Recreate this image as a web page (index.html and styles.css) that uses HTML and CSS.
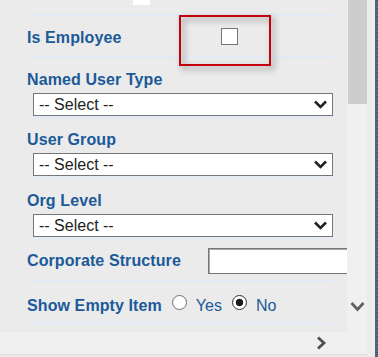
FILE: index.html
```html
<!DOCTYPE html>
<html>
<head>
<meta charset="utf-8">
<link rel="stylesheet" href="styles.css">
</head>
<body>
<div class="window">
  <div class="client">
    <div class="panes">
      <div class="viewport">
        <div class="form">
          <div class="row row--top"><span class="stub"></span></div>
          <div class="row row--check">
            <label class="lbl">Is Employee</label>
            <input type="checkbox" class="chk">
          </div>
          <div class="row row--stack">
            <label class="lbl">Named User Type</label>
            <div class="sel"><span>-- Select --</span><svg width="13" height="9" viewBox="0 0 13 9"><polyline points="1,1.5 6.5,7 12,1.5" fill="none" stroke="#222" stroke-width="2.5"/></svg></div>
          </div>
          <div class="row row--stack row--tall">
            <label class="lbl">User Group</label>
            <div class="sel"><span>-- Select --</span><svg width="13" height="9" viewBox="0 0 13 9"><polyline points="1,1.5 6.5,7 12,1.5" fill="none" stroke="#222" stroke-width="2.5"/></svg></div>
          </div>
          <div class="row row--stack">
            <label class="lbl">Org Level</label>
            <div class="sel"><span>-- Select --</span><svg width="13" height="9" viewBox="0 0 13 9"><polyline points="1,1.5 6.5,7 12,1.5" fill="none" stroke="#222" stroke-width="2.5"/></svg></div>
          </div>
          <div class="row row--field">
            <label class="lbl">Corporate Structure</label>
            <input type="text" class="txt">
          </div>
          <div class="row row--radio">
            <label class="lbl">Show Empty Item</label>
            <input type="radio" name="empty" class="rad">
            <span class="opt">Yes</span>
            <input type="radio" name="empty" class="rad" checked>
            <span class="opt">No</span>
          </div>
        </div>
        <div class="callout"></div>
      </div>
      <div class="vscroll">
        <div class="thumb"></div>
        <div class="spacer"></div>
        <svg class="down" width="15" height="11" viewBox="0 0 15 11"><polyline points="1.5,2 7.5,8.5 13.5,2" fill="none" stroke="#606060" stroke-width="2.8"/></svg>
      </div>
    </div>
    <div class="hscroll">
      <svg class="right" width="11" height="14" viewBox="0 0 11 14"><polyline points="2,1.5 8,7 2,12.5" fill="none" stroke="#505050" stroke-width="2.8"/></svg>
    </div>
    <div class="bottom-edge"></div>
  </div>
  <div class="gutter"></div>
  <div class="edge"></div>
</div>
</body>
</html>
```

FILE: styles.css
```css
html, body {
  margin: 0;
  padding: 0;
}
body {
  width: 378px;
  height: 357px;
  overflow: hidden;
  background: #ebebeb;
  font-family: "Liberation Sans", Arial, sans-serif;
}
.window {
  display: flex;
  height: 357px;
}
.client {
  width: 367px;
  display: flex;
  flex-direction: column;
}
.panes {
  display: flex;
  height: 332px;
}
.viewport {
  position: relative;
  width: 347px;
  overflow: hidden;
  background: #ebebeb;
}
.form {
  width: 306px;
  margin-left: 27px;
}
.row {
  display: flex;
  box-sizing: content-box;
  border-bottom: 2px solid #e3e9f7;
}
.row--top {
  height: 14px;
}
.stub {
  width: 17px;
  height: 5px;
  background: #fff;
  margin-left: 106px;
}
.lbl {
  font-weight: bold;
  font-size: 16px;
  line-height: 18px;
  letter-spacing: 0.1px;
  color: #1b5a99;
  white-space: nowrap;
  flex: none;
}
.row--check {
  height: 27px;
  padding-top: 13px;
  align-items: flex-start;
}
.row--check .lbl {
  width: 194px;
}
.chk {
  appearance: none;
  -webkit-appearance: none;
  margin: -1px 0 0 0;
  width: 17px;
  height: 17px;
  box-sizing: border-box;
  border: 1px solid #767676;
  background: #fff;
}
.row--stack {
  flex-direction: column;
  height: 45px;
  padding-top: 13px;
}
.row--tall {
  height: 46px;
}
.sel {
  margin-top: 4px;
  margin-left: 6px;
  width: 300px;
  height: 23px;
  box-sizing: border-box;
  border: 1px solid #767676;
  background: #fff;
  display: flex;
  align-items: center;
  justify-content: space-between;
  padding: 0 5px 0 5px;
  font-size: 16px;
  line-height: 18px;
  color: #1e1e1e;
}
.row--field {
  height: 32px;
  padding-top: 9px;
  align-items: flex-start;
}
.row--field .lbl {
  width: 181px;
  margin-top: 4px;
}
.txt {
  flex: none;
  margin: 0;
  width: 160px;
  height: 26px;
  box-sizing: border-box;
  border: 1px solid #767676;
  box-shadow: inset 1px 1px 0 #a9a9a9;
  background: #fff;
  padding: 0;
}
.row--radio {
  height: 25px;
  padding-top: 15px;
  align-items: flex-start;
}
.row--radio .lbl {
  margin-right: 10px;
}
.rad {
  appearance: none;
  -webkit-appearance: none;
  margin: -2px 9px 0 0;
  width: 15px;
  height: 15px;
  box-sizing: border-box;
  border: 1px solid #6e6e6e;
  border-radius: 50%;
  background: #fff;
  flex: none;
}
.rad:checked {
  border-color: #333;
  background: radial-gradient(circle, #1a1a1a 0 3.4px, #fff 4.1px);
}
.opt {
  font-size: 16px;
  line-height: 18px;
  color: #1b5a99;
  margin-right: 10px;
}
.callout {
  position: absolute;
  left: 179px;
  top: 15px;
  width: 92px;
  height: 51px;
  box-sizing: border-box;
  border: 2px solid #c4000b;
  filter: drop-shadow(3px 3px 3px rgba(0, 0, 0, 0.45));
}
.vscroll {
  width: 20px;
  background: #f0f0f0;
  display: flex;
  flex-direction: column;
  padding-bottom: 20px;
  box-sizing: border-box;
}
.thumb {
  margin-left: 1px;
  width: 19px;
  height: 104px;
  background: #cdcdcd;
}
.spacer {
  flex: 1;
}
.down {
  margin-left: 3px;
}
.hscroll {
  height: 22px;
  background: #f0f0f0;
  display: flex;
  align-items: flex-start;
}
.right {
  margin-left: 316px;
  margin-top: 4px;
}
.bottom-edge {
  height: 2px;
  border-top: 1px solid #dcdcdc;
  background: #e9e9e9;
}
.gutter {
  width: 8px;
  background: #ececec;
}
.edge {
  width: 3px;
  background: repeating-linear-gradient(to bottom, #3f586c 0 1px, #5d7588 1px 2px);
}
```
